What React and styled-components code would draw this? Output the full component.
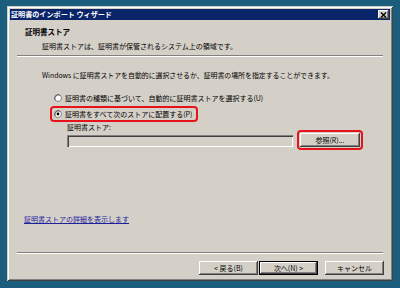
import React from 'react';
import styled, { createGlobalStyle } from 'styled-components';

const Global = createGlobalStyle`
  html, body { margin: 0; padding: 0; background: #1b5d7d; }
  body {
    width: 400px; height: 288px; overflow: hidden;
    font-family: "Noto Sans CJK JP", "Noto Sans", sans-serif;
    font-size: 7px; color: #000;
  }
  #root { padding: 6px 0 0 7px; }
`;

const Window = styled.div`
  width: 386px;
  height: 275px;
  box-sizing: border-box;
  padding: 3px;
  background: #d4d0c8;
  box-shadow: inset 1px 1px 0 #d4d0c8, inset -1px -1px 0 #404040,
    inset 2px 2px 0 #ffffff, inset -2px -2px 0 #808080;
  display: flex;
  flex-direction: column;
`;

const TitleBar = styled.div`
  height: 11px;
  display: flex;
  align-items: center;
  padding-left: 1px;
  background: #0a246a;
  color: #fff;
  font-weight: bold;
  font-size: 7.1px;
  line-height: 11px;
  white-space: nowrap;
`;

const CloseBtn = styled.div`
  margin-left: auto;
  margin-right: 1px;
  width: 11px;
  height: 9px;
  box-sizing: border-box;
  background: #d4d0c8;
  box-shadow: inset -1px -1px 0 #404040, inset 1px 1px 0 #ffffff,
    inset -2px -2px 0 #808080;
  display: flex;
  align-items: center;
  justify-content: center;
`;

const Body = styled.div`
  flex: 1;
  display: flex;
  flex-direction: column;
`;

const Header = styled.div`
  padding: 7px 0 0 15px;
`;

const HeaderTitle = styled.div`
  font-weight: bold;
  font-size: 7.5px;
  line-height: 10px;
`;

const HeaderSub = styled.div`
  margin: 4px 0 0 17px;
  line-height: 10px;
  white-space: nowrap;
`;

const Etched = styled.div`
  margin: ${(p) => p.$top || 0}px 7px 0;
  height: 0;
  border-top: 1px solid #808080;
  border-bottom: 1px solid #ffffff;
`;

const Intro = styled.div`
  margin: 13px 0 0 32px;
  line-height: 10px;
  font-size: 6.9px;
  white-space: nowrap;
`;

const RadioGroup = styled.div`
  margin: 12px 0 0 42px;
  display: flex;
  flex-direction: column;
  gap: 4px;
`;

const RadioRow = styled.div`
  width: 144px;
  height: 12px;
  box-sizing: border-box;
  padding-left: 2px;
  display: flex;
  align-items: center;
  gap: 3px;
  white-space: nowrap;
  line-height: 12px;
  border-radius: 2px;
  box-shadow: ${(p) => (p.$highlight ? '0 0 0 2px #e5141c' : 'none')};
`;

const RadioMark = styled.svg`
  flex-shrink: 0;
  display: block;
`;

const FieldLabel = styled.div`
  margin: 2px 0 0 57px;
  line-height: 10px;
`;

const FieldRow = styled.div`
  margin-left: 57px;
  height: 16px;
  display: flex;
  align-items: flex-end;
`;

const TextField = styled.div`
  width: 226px;
  height: 12px;
  margin: 0 6px 1px 0;
  background: #d4d0c8;
  box-shadow: inset 1px 1px 0 #808080, inset 2px 2px 0 #404040,
    inset -1px -1px 0 #ffffff, inset -2px -2px 0 #d4d0c8;
`;

const Highlight = styled.div`
  padding: 1px;
  border-radius: 2px;
  box-shadow: 0 0 0 2px #e5141c;
  display: flex;
`;

const Button = styled.button`
  width: ${(p) => p.$w || 59}px;
  height: 14px;
  margin: 0 ${(p) => p.$mr || 0}px 0 0;
  padding: 0;
  border: none;
  background: #d4d0c8;
  font-family: inherit;
  font-size: 7px;
  color: #000;
  line-height: 14px;
  white-space: nowrap;
  box-shadow: ${(p) =>
    p.$default
      ? 'inset 0 0 0 1px #000, inset -2px -2px 0 #404040, inset 2px 2px 0 #ffffff, inset -3px -3px 0 #808080'
      : 'inset -1px -1px 0 #404040, inset 1px 1px 0 #ffffff, inset -2px -2px 0 #808080'};
`;

const Link = styled.a`
  margin: 66px 0 0 14px;
  line-height: 10px;
  color: #1f1f9e;
  text-decoration: underline;
  align-self: flex-start;
`;

const Footer = styled.div`
  margin-top: auto;
`;

const ButtonRow = styled.div`
  margin-top: 7px;
  padding: 0 6px 3px 0;
  display: flex;
  justify-content: flex-end;
`;

const Radio = ({ checked }) => (
  <RadioMark width="8" height="8" viewBox="0 0 8 8">
    <circle cx="4" cy="4" r="3.5" fill="#fff" stroke="#808080" strokeWidth="1" />
    <path d="M1.2 5.8 A3.5 3.5 0 0 1 5.8 1.2" fill="none" stroke="#404040" strokeWidth="0.8" />
    {checked && <circle cx="4" cy="4" r="1.4" fill="#000" />}
  </RadioMark>
);

export default function App() {
  return (
    <>
      <Global />
      <Window>
        <TitleBar>
          証明書のインポート ウィザード
          <CloseBtn>
            <svg width="7" height="6" viewBox="0 0 7 6">
              <path d="M1 0.5 L6 5.5 M6 0.5 L1 5.5" stroke="#000" strokeWidth="1.3" />
            </svg>
          </CloseBtn>
        </TitleBar>
        <Body>
          <Header>
            <HeaderTitle>証明書ストア</HeaderTitle>
            <HeaderSub>証明書ストアは、証明書が保管されるシステム上の領域です。</HeaderSub>
          </Header>
          <Etched $top={4} />
          <Intro>
            Windows に証明書ストアを自動的に選択させるか、証明書の場所を指定することができます。
          </Intro>
          <RadioGroup>
            <RadioRow>
              <Radio />
              証明書の種類に基づいて、自動的に証明書ストアを選択する(U)
            </RadioRow>
            <RadioRow $highlight>
              <Radio checked />
              証明書をすべて次のストアに配置する(P)
            </RadioRow>
          </RadioGroup>
          <FieldLabel>証明書ストア:</FieldLabel>
          <FieldRow>
            <TextField />
            <Highlight>
              <Button $w={60}>参照(R)...</Button>
            </Highlight>
          </FieldRow>
          <Link href="#">証明書ストアの詳細を表示します</Link>
          <Footer>
            <Etched />
            <ButtonRow>
              <Button $mr={1}>&lt; 戻る(B)</Button>
              <Button $mr={7} $default>次へ(N) &gt;</Button>
              <Button>キャンセル</Button>
            </ButtonRow>
          </Footer>
        </Body>
      </Window>
    </>
  );
}
